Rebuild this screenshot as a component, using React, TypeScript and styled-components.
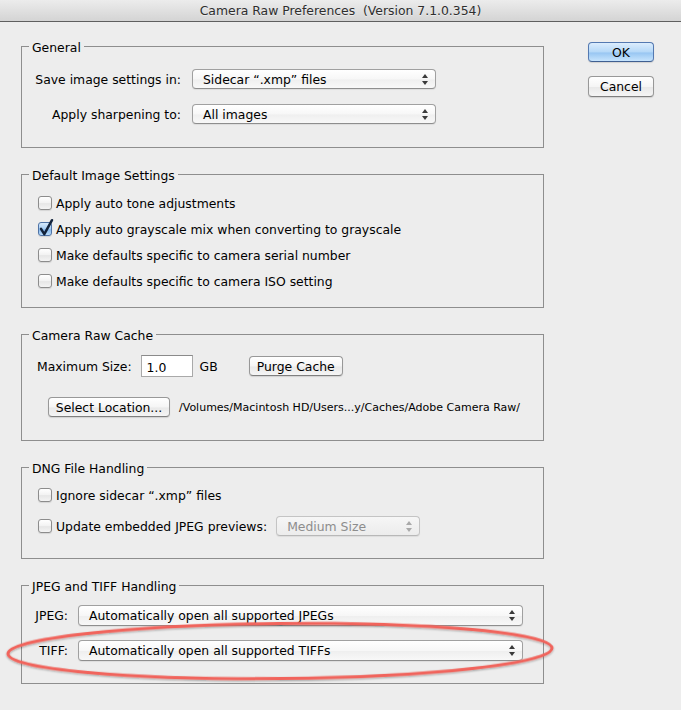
import React from 'react';
import styled, { createGlobalStyle } from 'styled-components';

const GlobalStyle = createGlobalStyle`
  html, body { margin: 0; padding: 0; background: #ededed; }
  body {
    font-family: "DejaVu Sans", "Noto Sans", sans-serif;
    font-size: 12.4px;
    color: #000;
  }
  * { box-sizing: border-box; }
`;

const Window = styled.div`
  position: relative;
  width: 681px;
  height: 710px;
  overflow: hidden;
  background: #ededed;
  display: flex;
  flex-direction: column;
`;

const TitleBar = styled.div`
  flex: none;
  height: 22px;
  display: flex;
  align-items: center;
  justify-content: center;
  background: linear-gradient(#ececec, #d4d4d4);
  border-bottom: 1px solid #5f5f5f;
  font-size: 12.4px;
  color: #2e2e2e;
  white-space: pre;
  text-shadow: 0 1px 0 rgba(255, 255, 255, 0.5);
`;

const Body = styled.div`
  display: flex;
  align-items: flex-start;
`;

const LeftColumn = styled.div`
  display: flex;
  flex-direction: column;
  gap: 17px;
  padding: 15px 0 0 21px;
`;

const RightColumn = styled.div`
  display: flex;
  flex-direction: column;
  gap: 14px;
  margin-left: 44px;
  padding-top: 20px;
`;

const Group = styled.fieldset`
  width: 523px;
  min-width: 0;
  margin: 0;
  padding: 0;
  border: 1px solid #8e8e8e;
`;

const Legend = styled.legend`
  margin-left: 7px;
  padding: 4px 3px 0;
  font-size: 12.4px;
  line-height: 14px;
`;

const FormGrid = styled.div<{ $pad: string; $rowGap: number; $colGap: number; $labelW: number }>`
  display: grid;
  grid-template-columns: ${(p) => p.$labelW}px max-content;
  align-items: center;
  row-gap: ${(p) => p.$rowGap}px;
  column-gap: ${(p) => p.$colGap}px;
  padding: ${(p) => p.$pad};
`;

const FormLabel = styled.span`
  justify-self: end;
  white-space: nowrap;
`;

const CheckList = styled.div<{ $pad: string; $gap: number }>`
  display: flex;
  flex-direction: column;
  gap: ${(p) => p.$gap}px;
  padding: ${(p) => p.$pad};
`;

const CheckRow = styled.label`
  display: flex;
  align-items: center;
  height: 20px;
  gap: 4px;
  white-space: nowrap;
`;

const CheckBox = styled.span<{ $checked?: boolean }>`
  position: relative;
  flex: none;
  width: 14px;
  height: 14px;
  border-radius: 3px;
  border: 1px solid ${(p) => (p.$checked ? '#4f73a6' : '#8c8c8c')};
  background: ${(p) =>
    p.$checked
      ? 'linear-gradient(#d6e9fb, #a6cdf3 50%, #86b9ee 55%, #b9dcfb)'
      : 'linear-gradient(#ffffff, #f2f2f2 50%, #e6e6e6 55%, #f4f4f4)'};
  box-shadow: 0 1px 1px rgba(0, 0, 0, 0.1);
`;

const CheckMark = styled.svg`
  position: absolute;
  left: 0;
  top: -4px;
  overflow: visible;
`;

const PopupBox = styled.div<{ $w: number; $h: number; $disabled?: boolean }>`
  width: ${(p) => p.$w}px;
  height: ${(p) => p.$h}px;
  display: flex;
  align-items: center;
  justify-content: space-between;
  padding: 0 7px 0 10px;
  border: 1px solid ${(p) => (p.$disabled ? '#c4c4c4' : '#a0a0a0')};
  border-bottom-color: ${(p) => (p.$disabled ? '#b8b8b8' : '#8e8e8e')};
  border-radius: 4px;
  background: ${(p) =>
    p.$disabled
      ? 'linear-gradient(#f6f6f6, #ececec)'
      : 'linear-gradient(#ffffff, #f7f7f7 50%, #efefef 55%, #f8f8f8)'};
  color: ${(p) => (p.$disabled ? '#8d8d8d' : '#000')};
  box-shadow: 0 1px 1px rgba(0, 0, 0, 0.07);
  white-space: nowrap;
`;

const Arrows = styled.svg<{ $disabled?: boolean }>`
  flex: none;
  fill: ${(p) => (p.$disabled ? '#a9a9a9' : '#3a3a3a')};
`;

const PushButton = styled.button<{ $w: number; $h?: number; $default?: boolean }>`
  width: ${(p) => p.$w}px;
  height: ${(p) => p.$h ?? 20}px;
  padding: 0;
  margin: 0;
  font-family: "DejaVu Sans", "Noto Sans", sans-serif;
  font-size: 12.4px;
  color: #000;
  border-radius: 4px;
  border: 1px solid ${(p) => (p.$default ? '#5479b1' : '#989898')};
  border-bottom-color: ${(p) => (p.$default ? '#3f5f91' : '#7f7f7f')};
  background: ${(p) =>
    p.$default
      ? 'linear-gradient(#dcedfd, #b5d8f8 50%, #98c6f2 55%, #c7e4fd)'
      : 'linear-gradient(#ffffff, #f5f5f5 50%, #e9e9e9 55%, #f5f5f5)'};
  box-shadow: 0 1px 1px rgba(0, 0, 0, 0.12);
  white-space: nowrap;
`;

const CacheBody = styled.div`
  display: flex;
  flex-direction: column;
  gap: 20px;
  padding: 12px 0 23px 15px;
`;

const CacheRow = styled.div<{ $h: number; $indent?: number }>`
  display: flex;
  align-items: center;
  height: ${(p) => p.$h}px;
  padding-left: ${(p) => p.$indent ?? 0}px;
  white-space: nowrap;
`;

const TextField = styled.div`
  width: 52px;
  height: 22px;
  margin-left: 9px;
  padding: 3px 0 0 5px;
  background: #fff;
  border: 1px solid #a9a9a9;
  border-top-color: #8a8a8a;
  display: flex;
  align-items: center;
`;

const Unit = styled.span`
  margin-left: 7px;
`;

const Spacer = styled.span<{ $w: number }>`
  display: inline-block;
  flex: none;
  width: ${(p) => p.$w}px;
`;

const PathText = styled.span`
  margin-left: 9px;
  font-size: 11px;
`;

const Overlay = styled.svg`
  position: absolute;
  left: 0;
  top: 0;
  pointer-events: none;
`;

const Popup: React.FC<{ w: number; h?: number; disabled?: boolean; children: React.ReactNode }> = ({
  w,
  h = 20,
  disabled,
  children,
}) => (
  <PopupBox $w={w} $h={h} $disabled={disabled}>
    <span>{children}</span>
    <Arrows $disabled={disabled} width="6" height="11" viewBox="0 0 6 11">
      <polygon points="3,0 6,4 0,4" />
      <polygon points="0,7 6,7 3,11" />
    </Arrows>
  </PopupBox>
);

const Check: React.FC<{ checked?: boolean; children: React.ReactNode }> = ({ checked, children }) => (
  <CheckRow>
    <CheckBox $checked={checked}>
      {checked && (
        <CheckMark width="14" height="18" viewBox="0 0 14 18">
          <path
            d="M2 9.8 L5.3 15.2 L13 1.2"
            fill="none"
            stroke="#13233b"
            strokeWidth="2.5"
            strokeLinecap="round"
            strokeLinejoin="round"
          />
        </CheckMark>
      )}
    </CheckBox>
    <span>{children}</span>
  </CheckRow>
);

export default function App() {
  return (
    <>
      <GlobalStyle />
      <Window>
        <TitleBar>Camera Raw Preferences  (Version 7.1.0.354)</TitleBar>
        <Body>
          <LeftColumn>
            <Group>
              <Legend>General</Legend>
              <FormGrid $pad="14px 0 23px 15px" $rowGap={15} $colGap={11} $labelW={144}>
                <FormLabel>Save image settings in:</FormLabel>
                <Popup w={244}>Sidecar “.xmp” files</Popup>
                <FormLabel>Apply sharpening to:</FormLabel>
                <Popup w={244}>All images</Popup>
              </FormGrid>
            </Group>

            <Group>
              <Legend>Default Image Settings</Legend>
              <CheckList $pad="10px 0 16px 16px" $gap={6}>
                <Check>Apply auto tone adjustments</Check>
                <Check checked>Apply auto grayscale mix when converting to grayscale</Check>
                <Check>Make defaults specific to camera serial number</Check>
                <Check>Make defaults specific to camera ISO setting</Check>
              </CheckList>
            </Group>

            <Group>
              <Legend>Camera Raw Cache</Legend>
              <CacheBody>
                <CacheRow $h={22}>
                  <span>Maximum Size:</span>
                  <TextField>1.0</TextField>
                  <Unit>GB</Unit>
                  <Spacer $w={31} />
                  <PushButton $w={94}>Purge Cache</PushButton>
                </CacheRow>
                <CacheRow $h={20} $indent={11}>
                  <PushButton $w={122}>Select Location...</PushButton>
                  <PathText>/Volumes/Macintosh HD/Users...y/Caches/Adobe Camera Raw/</PathText>
                </CacheRow>
              </CacheBody>
            </Group>

            <Group>
              <Legend>DNG File Handling</Legend>
              <CheckList $pad="9px 0 22px 16px" $gap={11}>
                <Check>Ignore sidecar “.xmp” files</Check>
                <CheckRow as="div">
                  <Check>Update embedded JPEG previews:</Check>
                  <Spacer $w={1} />
                  <Popup w={144} disabled>
                    Medium Size
                  </Popup>
                </CheckRow>
              </CheckList>
            </Group>

            <Group>
              <Legend>JPEG and TIFF Handling</Legend>
              <FormGrid $pad="11px 0 22px 13px" $rowGap={14} $colGap={10} $labelW={33}>
                <FormLabel>JPEG:</FormLabel>
                <Popup w={445} h={21}>
                  Automatically open all supported JPEGs
                </Popup>
                <FormLabel>TIFF:</FormLabel>
                <Popup w={445} h={21}>
                  Automatically open all supported TIFFs
                </Popup>
              </FormGrid>
            </Group>
          </LeftColumn>

          <RightColumn>
            <PushButton $w={66} $default>
              OK
            </PushButton>
            <PushButton $w={66} $h={21}>
              Cancel
            </PushButton>
          </RightColumn>
        </Body>

        <Overlay width="681" height="710" viewBox="0 0 681 710">
          <defs>
            <filter id="glow" x="-5%" y="-50%" width="110%" height="200%">
              <feGaussianBlur in="SourceAlpha" stdDeviation="1.2" />
              <feOffset dx="0" dy="1" result="b" />
              <feComponentTransfer>
                <feFuncA type="linear" slope="0.35" />
              </feComponentTransfer>
              <feMerge>
                <feMergeNode />
                <feMergeNode in="SourceGraphic" />
              </feMerge>
            </filter>
          </defs>
          <ellipse
            cx="280"
            cy="651"
            rx="272"
            ry="27.5"
            transform="rotate(-0.6 280 651)"
            fill="none"
            stroke="#f1645b"
            strokeWidth="3"
            filter="url(#glow)"
          />
        </Overlay>
      </Window>
    </>
  );
}
